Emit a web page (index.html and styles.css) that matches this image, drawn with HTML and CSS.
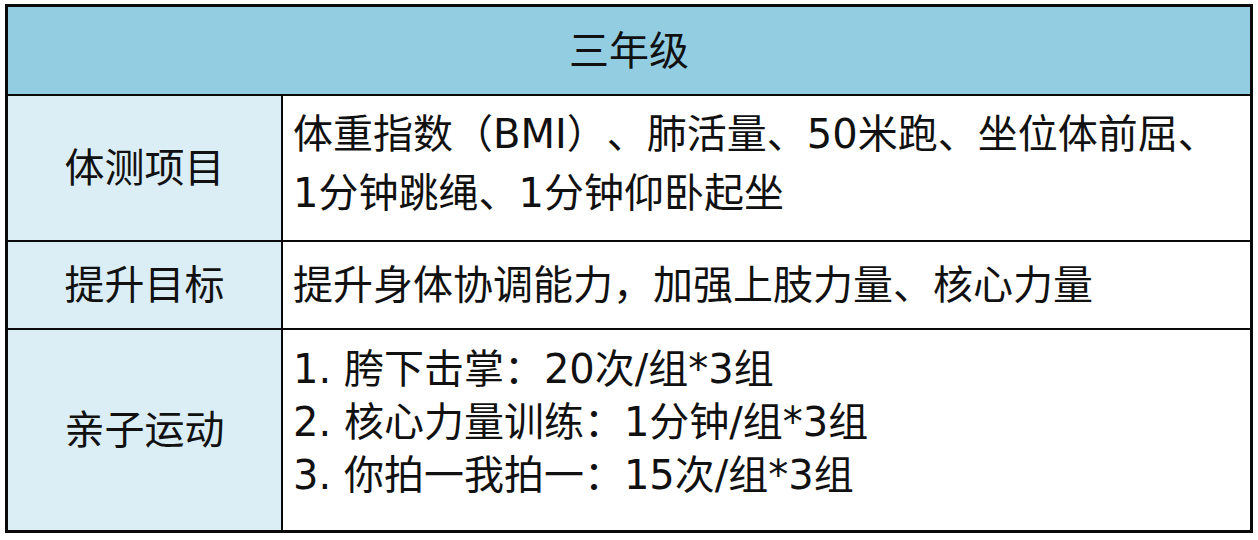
FILE: index.html
```html
<!DOCTYPE html>
<html lang="zh-CN">
<head>
<meta charset="utf-8">
<link rel="stylesheet" href="styles.css">
</head>
<body>
<div class="sheet">
  <div class="grid">
    <div class="cell head">三年级</div>
    <div class="cell label">体测项目</div>
    <div class="cell body tests">体重指数（BMI）、肺活量、50米跑、坐位体前屈、<br>1分钟跳绳、1分钟仰卧起坐</div>
    <div class="cell label">提升目标</div>
    <div class="cell body">提升身体协调能力，加强上肢力量、核心力量</div>
    <div class="cell label">亲子运动</div>
    <div class="cell body activities">1. 胯下击掌：20次/组*3组<br>2. 核心力量训练：1分钟/组*3组<br>3. 你拍一我拍一：15次/组*3组</div>
  </div>
</div>
</body>
</html>
```

FILE: styles.css
```css
html, body {
  margin: 0;
  padding: 0;
  background: #ffffff;
}
body {
  width: 1258px;
  height: 540px;
  overflow: hidden;
  font-family: "DejaVu Sans", "Noto Sans CJK SC", sans-serif;
  color: #111111;
}
.sheet {
  padding: 4px 0 0 5px;
}
.grid {
  width: 1242px;
  border: 3px solid #0a0a0a;
  background: #0a0a0a;
  display: grid;
  grid-template-columns: 273px 967px;
  grid-template-rows: 87px 144px 86px 200px;
  gap: 2px;
}
.cell {
  display: flex;
  align-items: center;
  font-size: 40px;
  line-height: 53px;
  text-spacing-trim: space-all;
}
.head {
  grid-column: 1 / 3;
  justify-content: center;
  background: #92cde1;
  padding-top: 2px;
}
.label {
  justify-content: center;
  background: #dbedf5;
}
.body {
  background: #ffffff;
  padding-left: 10px;
}
.tests {
  line-height: 59px;
  padding-bottom: 9px;
}
.activities {
  line-height: 53px;
  padding-bottom: 16px;
}
```
